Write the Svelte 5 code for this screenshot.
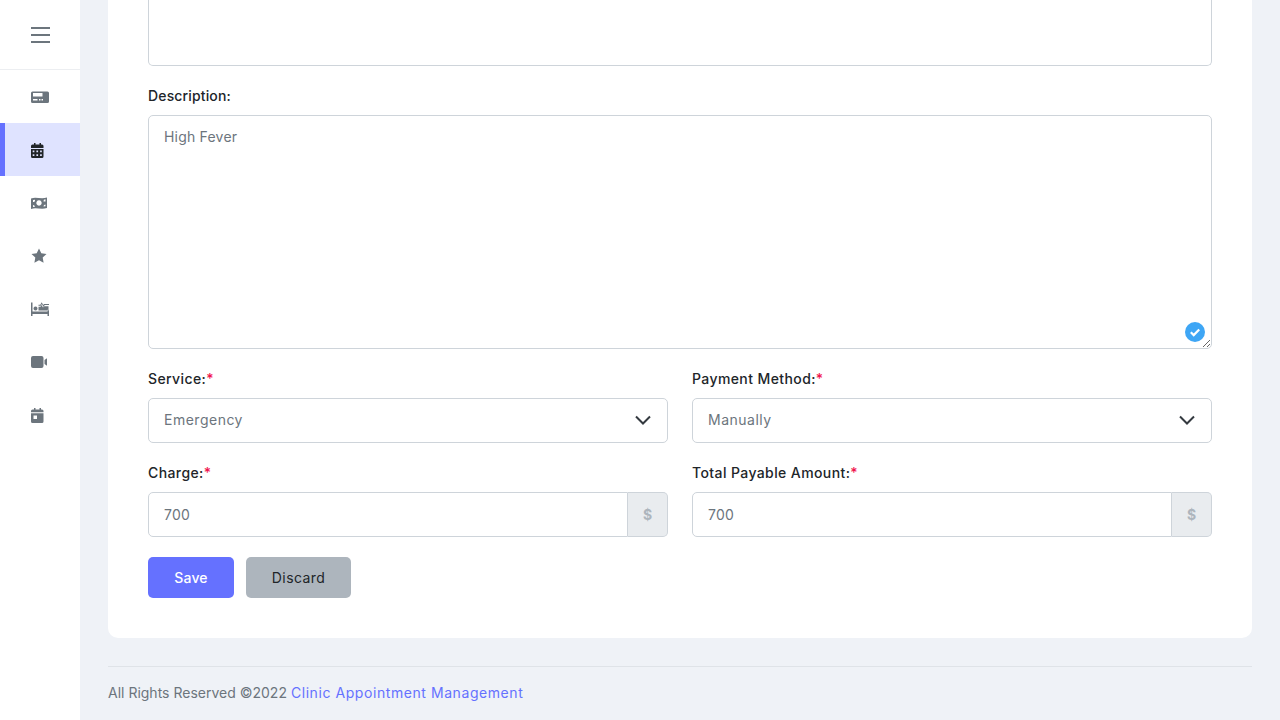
<script>
    const navIcons = ["pager", "calendar", "money", "star", "bed", "video", "day"];
    const activeIcon = "calendar";

    let description = "High Fever";
    let service = "Emergency";
    let payment = "Manually";
    let charge = "700";
    let total = "700";
</script>

<div class="layout">
    <aside class="sidebar">
        <div class="brand">
            <span class="burger"><i></i><i></i><i></i></span>
        </div>
        <nav>
            {#each navIcons as icon}
                <div class="navItem" class:active={icon === activeIcon}>
                    <svg width="20" height="20" viewBox="0 0 20 20" fill="currentColor" fill-rule="evenodd">
                        {#if icon === "pager"}
                            <path d="M2 4.500h14.500A1.500 1.500 0 0 1 18 6v8.500a1.500 1.500 0 0 1-1.500 1.500H1.500A1.500 1.500 0 0 1 0 14.500V6A1.500 1.500 0 0 1 1.500 4.500ZM2 6v3.500h9.500V6ZM2 12v1.500h4.500V12Zm6 0v1.500h1.500V12Zm2.500 0v1.500H12V12Z" />
                        {:else if icon === "calendar"}
                            <path d="M3 3h1.500v1.500h4V3H10v1.500h1A1.500 1.500 0 0 1 12.500 6v2H0V6a1.500 1.500 0 0 1 1.500-1.500H3ZM0 9h12.500v7.500a1.500 1.500 0 0 1-1.500 1.500H1.500A1.500 1.500 0 0 1 0 16.500ZM1.700 10.500V12.200H3.400V10.500ZM5.400 10.500V12.200H7.100V10.500ZM9.100 10.500V12.200H10.800V10.500ZM1.700 14.300V16H3.400V14.300ZM5.400 14.300V16H7.100V14.300ZM9.100 14.300V16H10.800V14.300Z" />
                        {:else if icon === "money"}
                            <path d="M0 5.500c5-1.800 10.500 1 16-1v10.500c-5.500 2-11-.8-16 1ZM8 7.300a2.700 2.700 0 1 0 .01 0ZM2 7v2a2 2 0 0 0 2-2.300ZM14.500 6.300A2 2 0 0 0 12.500 8.500l2-.1ZM2 12v2l2-.3A2 2 0 0 0 2 12ZM14.500 11.500a2 2 0 0 0-2 2l2-.3Z" />
                        {:else if icon === "star"}
                            <path d="M8 2.500l2.300 4.700 5.200.8-3.800 3.600.9 5.200L8 14.300l-4.600 2.500.9-5.200L.5 8l5.200-.8Z" />
                        {:else if icon === "bed"}
                            <path d="M0 3.500h1.500v9H16.500V10.800H18V17h-1.500v-2h-15v2H0ZM4.500 7.500a2 2 0 1 1-.01 0ZM7.500 11.500V7.800h2l1-1.800 1.500 2.500 1-1.300h4.500v4.300ZM7.500 6.800V5.800h1.800l1.400-2.500 1.500 2.600.8-1H18v1h-4.200l-1.400 1.900-1.600-2.700-.9 1.700Z" />
                        {:else if icon === "video"}
                            <path d="M2 4h8.500A2 2 0 0 1 12.500 6v8a2 2 0 0 1-2 2H2a2 2 0 0 1-2-2V6a2 2 0 0 1 2-2ZM13.500 8 16 6.200V13.800L13.500 12Z" />
                        {:else}
                            <path d="M3 3h1.500v1.500h4V3H10v1.500h1A1.500 1.500 0 0 1 12.500 6v1.300H0V6a1.500 1.500 0 0 1 1.500-1.500H3ZM0 8.300h12.500v8.200A1.500 1.500 0 0 1 11 18H1.500A1.500 1.500 0 0 1 0 16.500ZM2.500 10.500V14H6V10.500Z" />
                        {/if}
                    </svg>
                </div>
            {/each}
        </nav>
    </aside>

    <main class="main">
        <section class="card">
            <div class="leftover"></div>

            <label class="label descLabel" for="description">Description:</label>
            <div class="descWrap">
                <textarea id="description" class="control desc" bind:value={description}></textarea>
                <span class="valid">
                    <svg width="20" height="20" viewBox="0 0 20 20">
                        <circle cx="10" cy="10" r="10" fill="#3ea6f5" />
                        <path d="M5.800 10.300l2.900 2.800L14.200 7.400" fill="none" stroke="#fff" stroke-width="2.200" />
                    </svg>
                </span>
            </div>

            <div class="grid">
                <div>
                    <label class="label" for="service">Service:<span class="req">*</span></label>
                    <div class="selectWrap">
                        <select id="service" class="control field" bind:value={service}>
                            <option>Emergency</option>
                        </select>
                        <svg class="chevron" width="16" height="10" viewBox="0 0 16 10">
                            <path d="M1 1.500l7 7 7-7" fill="none" stroke="#343a40" stroke-width="2" />
                        </svg>
                    </div>
                </div>
                <div>
                    <label class="label" for="payment">Payment Method:<span class="req">*</span></label>
                    <div class="selectWrap">
                        <select id="payment" class="control field" bind:value={payment}>
                            <option>Manually</option>
                        </select>
                        <svg class="chevron" width="16" height="10" viewBox="0 0 16 10">
                            <path d="M1 1.500l7 7 7-7" fill="none" stroke="#343a40" stroke-width="2" />
                        </svg>
                    </div>
                </div>
                <div>
                    <label class="label" for="charge">Charge:<span class="req">*</span></label>
                    <div class="group">
                        <input id="charge" class="control field" bind:value={charge} />
                        <span class="addon">$</span>
                    </div>
                </div>
                <div>
                    <label class="label" for="total">Total Payable Amount:<span class="req">*</span></label>
                    <div class="group">
                        <input id="total" class="control field" bind:value={total} />
                        <span class="addon">$</span>
                    </div>
                </div>
            </div>

            <div class="actions">
                <button class="btn save">Save</button>
                <button class="btn discard">Discard</button>
            </div>
        </section>

        <footer class="footer">
            All Rights Reserved ©2022 <span class="link">Clinic Appointment Management</span>
        </footer>
    </main>
</div>

<style>
    :global(body) {
        margin: 0;
        background-color: #eff2f7;
        font-family: "Inter", "Open Sans", sans-serif;
    }
    .layout {
        display: flex;
        height: 720px;
        overflow: hidden;
    }
    .sidebar {
        width: 80px;
        flex: none;
        background-color: #ffffff;
    }
    .brand {
        height: 69px;
        border-bottom: 1px solid #eceef1;
        display: flex;
        align-items: center;
        justify-content: center;
    }
    .burger {
        display: flex;
        flex-direction: column;
        gap: 5px;
        width: 19px;
    }
    .burger i {
        height: 2px;
        background-color: #6c757d;
    }
    .navItem {
        height: 53px;
        box-sizing: border-box;
        padding-left: 31px;
        display: flex;
        align-items: center;
        color: #6c757d;
    }
    .navItem.active {
        background-color: #dfe3ff;
        border-left: 5px solid #6571ff;
        padding-left: 26px;
        color: #212529;
    }
    .main {
        flex: 1;
        box-sizing: border-box;
        height: 720px;
        padding: 0 28px;
        display: flex;
        flex-direction: column;
        justify-content: flex-end;
    }
    .card {
        flex: none;
        background-color: #ffffff;
        border-radius: 10px;
        padding: 0 40px 40px;
    }
    .leftover {
        height: 120px;
        border: 1px solid #ced4da;
        border-top: none;
        border-radius: 0 0 5px 5px;
        margin-bottom: 20px;
    }
    .label {
        display: block;
        height: 19px;
        line-height: 19px;
        font-size: 14px;
        font-weight: 500;
        letter-spacing: 0.4px;
        color: #212529;
    }
    .descLabel {
        letter-spacing: 0.15px;
        margin-bottom: 10px;
    }
    .req {
        color: #f0134d;
    }
    .control {
        box-sizing: border-box;
        border: 1px solid #ced4da;
        border-radius: 5px;
        background-color: #ffffff;
        color: #6c757d;
        font-family: inherit;
        font-size: 14px;
        letter-spacing: 0.2px;
        outline: none;
    }
    .descWrap {
        position: relative;
        height: 234px;
        margin-bottom: 20px;
    }
    .desc {
        display: block;
        width: 100%;
        height: 234px;
        padding: 10px 15px;
        line-height: 21px;
    }
    .valid {
        position: absolute;
        right: 7px;
        bottom: 7px;
        width: 20px;
        height: 20px;
    }
    .grid {
        display: grid;
        grid-template-columns: 1fr 1fr;
        column-gap: 24px;
        row-gap: 20px;
    }
    .grid .label {
        margin-bottom: 10px;
    }
    .field {
        display: block;
        width: 100%;
        height: 45px;
        padding: 0 15px;
    }
    .selectWrap {
        position: relative;
    }
    select.field {
        appearance: none;
        padding-bottom: 2px;
        letter-spacing: 0.5px;
    }
    .chevron {
        position: absolute;
        right: 17px;
        top: 17px;
        pointer-events: none;
    }
    .group {
        display: flex;
    }
    .group .field {
        flex: 1;
        min-width: 0;
        border-radius: 5px 0 0 5px;
    }
    .addon {
        width: 40px;
        height: 45px;
        box-sizing: border-box;
        border: 1px solid #ced4da;
        border-left: none;
        border-radius: 0 5px 5px 0;
        background-color: #e9ecef;
        color: #adb5bd;
        font-weight: 700;
        font-size: 14px;
        display: flex;
        align-items: center;
        justify-content: center;
    }
    .actions {
        display: flex;
        gap: 12px;
        margin-top: 20px;
    }
    .btn {
        height: 41px;
        border: none;
        border-radius: 5px;
        font-family: inherit;
        font-size: 14px;
        font-weight: 500;
        letter-spacing: 0.2px;
    }
    .save {
        width: 86px;
        background-color: #6571ff;
        color: #ffffff;
    }
    .discard {
        width: 105px;
        background-color: #adb5bd;
        color: #212529;
        font-weight: 400;
        letter-spacing: 0.4px;
    }
    .footer {
        flex: none;
        margin-top: 28px;
        border-top: 1px solid #dfe3e8;
        height: 54px;
        box-sizing: border-box;
        padding-top: 16px;
        line-height: 20px;
        font-size: 14px;
        color: #6c757d;
    }
    .link {
        color: #6571ff;
        letter-spacing: 0.57px;
    }
</style>
